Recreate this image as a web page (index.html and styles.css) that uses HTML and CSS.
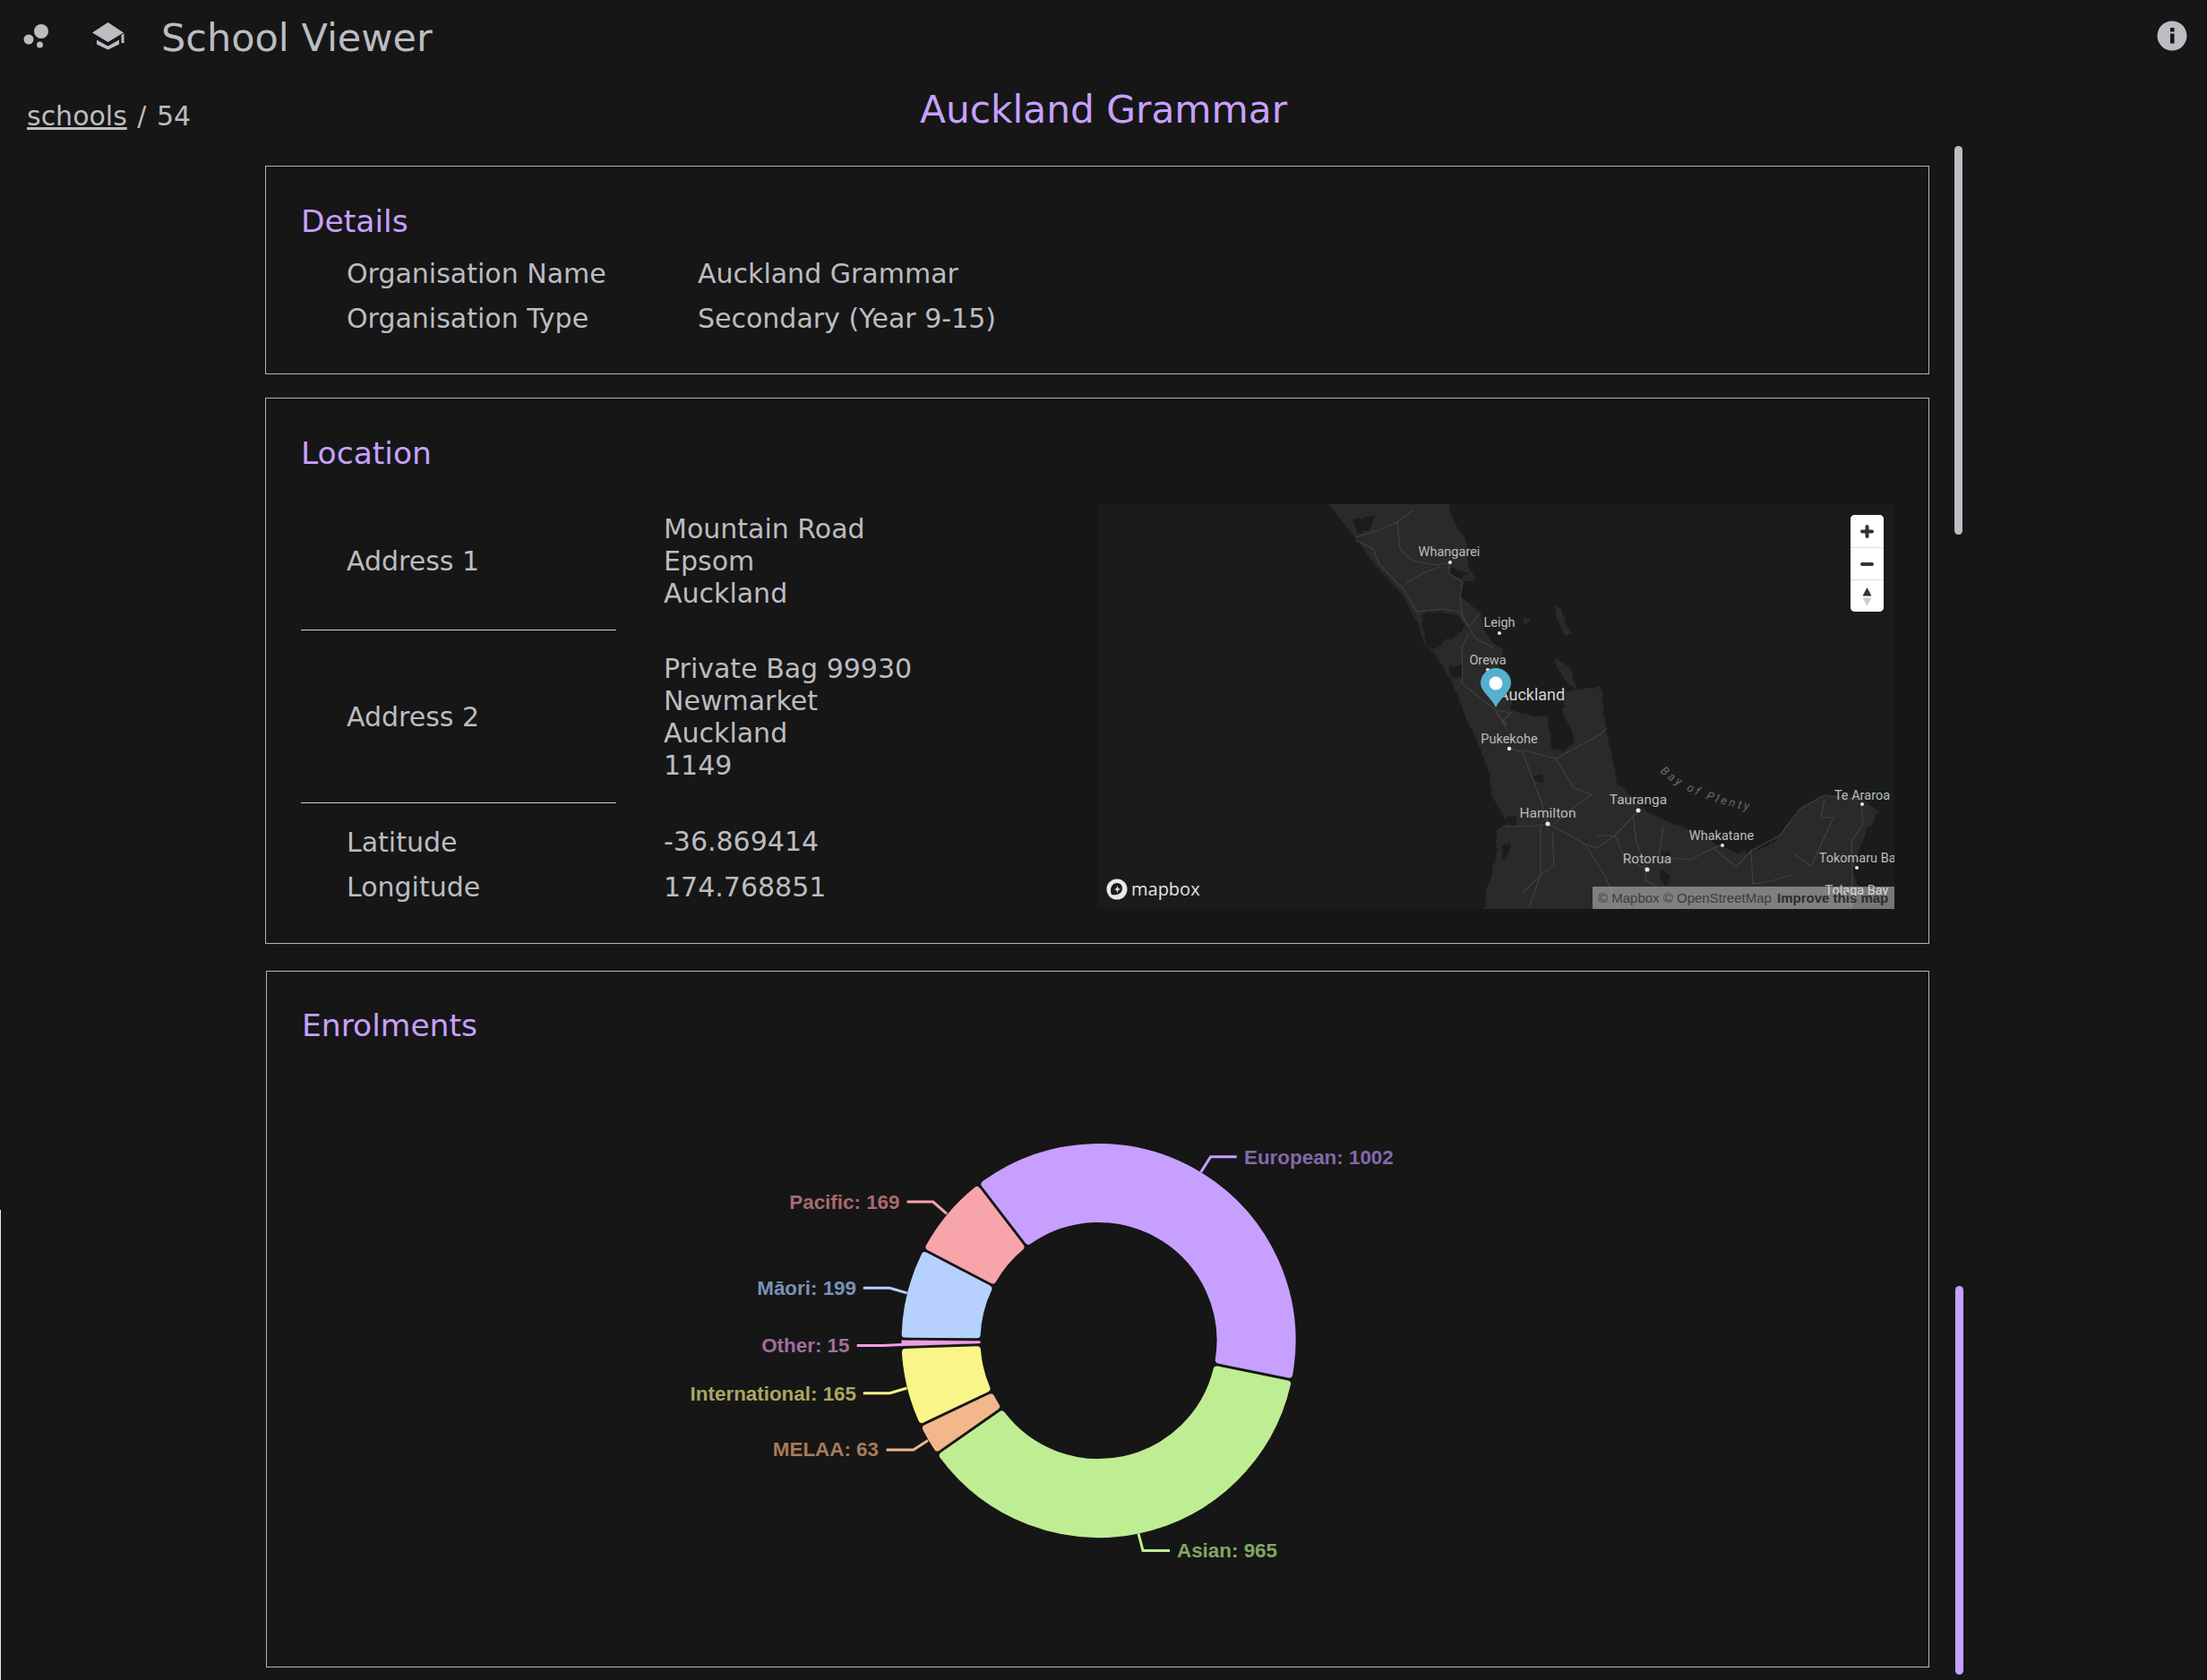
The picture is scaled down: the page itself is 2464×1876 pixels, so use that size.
FILE: index.html
```html
<!DOCTYPE html>
<html lang="en">
<head>
    <meta charset="UTF-8">
    <meta name="viewport" content="width=device-width, initial-scale=1.0">
    <title>School Viewer</title>
    <link rel="stylesheet" href="styles.css">
</head>
<body>
    <div id="app">
        <!-- Top bar -->
        <header class="topbar">
            <svg class="logo-dots" viewBox="0 0 60 60" width="60" height="60">
                <circle cx="46" cy="35" r="8"/>
                <circle cx="32" cy="44" r="5.5"/>
                <circle cx="44.5" cy="50" r="3.5"/>
            </svg>
            <svg class="logo-school" viewBox="0 0 40 34" width="40" height="34">
                <path d="M19.5 2 L37 13.5 L19.5 24 L2 13.5 Z"/>
                <path d="M7 21.5 L19.5 28.5 L32 21.5 L32 26.5 L19.5 32.5 L7 26.5 Z"/>
                <path d="M34.5 16 L37.5 14.5 L37.5 25 L34.5 25 Z"/>
            </svg>
            <span class="app-title">School Viewer</span>
            <svg class="info-icon" viewBox="0 0 34 34" width="34" height="34">
                <circle cx="17" cy="17" r="16.5"/>
                <rect class="info-mark" x="15" y="8" width="4.5" height="4.5"/>
                <rect class="info-mark" x="15" y="14.5" width="4.5" height="11"/>
            </svg>
        </header>

        <div class="title-row">
            <div class="breadcrumb"><a href="#">schools</a> / 54</div>
            <h1>Auckland Grammar</h1>
        </div>

        <main class="content">
            <!-- Details -->
            <section class="card card-details">
                <h2>Details</h2>
                <div class="detail-row"><span class="detail-label">Organisation Name</span><span>Auckland Grammar</span></div>
                <div class="detail-row"><span class="detail-label">Organisation Type</span><span>Secondary (Year 9-15)</span></div>
            </section>

            <!-- Location -->
            <section class="card card-location">
                <h2>Location</h2>
                <div class="location-body">
                    <table class="location-table">
                        <tr class="row-address1">
                            <th>Address 1</th>
                            <td>Mountain Road<br>Epsom<br>Auckland</td>
                        </tr>
                        <tr class="row-address2">
                            <th>Address 2</th>
                            <td>Private Bag 99930<br>Newmarket<br>Auckland<br>1149</td>
                        </tr>
                        <tr class="row-lat">
                            <th>Latitude</th>
                            <td>-36.869414</td>
                        </tr>
                        <tr class="row-long">
                            <th>Longitude</th>
                            <td>174.768851</td>
                        </tr>
                    </table>

                    <div class="map">
                        <svg class="map-canvas" viewBox="1225 563 890 452" width="890" height="452">
                            <defs>
                                <filter id="rough" x="-5%" y="-5%" width="110%" height="110%">
                                    <feTurbulence type="fractalNoise" baseFrequency="0.16" numOctaves="2" seed="4"/>
                                    <feDisplacementMap in="SourceGraphic" scale="6"/>
                                </filter>
                            </defs>
                            <g filter="url(#rough)">
                                <path class="land" d="M1470 545 L1483 563 L1513 600 L1537 633 L1567 666 L1583 696 L1590 720 L1602 730 L1620 760 L1640 810 L1645 817 L1663 863 L1665 887 L1683 920 L1670 928 L1672 947 L1662 987 L1655 1030 L2060 1030 L2067 1015 L2075 990 L2068 973 L2077 943 L2087 923 L2098 907 L2080 893 L2037 888 L2010 903 L1987 933 L1970 948 L1940 953 L1917 943 L1890 928 L1860 917 L1833 903 L1810 878 L1805 877 L1803 860 L1793 813 L1787 767 L1748 772 L1745 797 L1757 820 L1757 830 L1747 838 L1733 837 L1730 817 L1727 800 L1713 800 L1687 793 L1687 776 L1673 743 L1680 726 L1667 718 L1657 703 L1652 683 L1630 666 L1633 650 L1647 645 L1640 635 L1637 603 L1623 583 L1617 563 L1612 545 Z"/>
                                <path class="land" d="M1737 676 L1743 680 L1748 696 L1757 710 L1747 710 L1737 690 Z"/>
                                <path class="land" d="M1702 691 L1708 691 L1708 697 L1702 697 Z"/>
                                <path class="land" d="M1735 735 L1753 745 L1760 770 L1750 763 L1737 743 Z"/>
                                <path class="water" d="M1587 686 L1603 683 L1627 686 L1637 700 L1627 710 L1613 716 L1602 724 L1592 722 L1590 703 Z"/>
                                <path class="water" d="M1618 633 L1640 640 L1632 645 L1620 643 Z"/>
                                <path class="water" d="M1510 580 L1535 575 L1530 590 L1515 595 Z"/>
                                <path class="water" d="M1618 745 L1633 743 L1633 755 L1620 757 Z"/>
                                <path class="water" d="M1713 867 L1723 865 L1724 875 L1715 873 Z"/>
                                <path class="water" d="M1682 912 L1694 912 L1692 922 L1684 920 Z"/>
                                <path class="water" d="M1677 945 L1686 940 L1684 956 L1676 962 Z"/>
                                <path class="water" d="M1855 952 L1864 950 L1866 958 L1858 957 Z"/>
                                <path class="water" d="M1855 970 L1866 980 L1860 990 L1853 980 Z"/>
                            </g>
                            <g class="roads">
                                <path d="M1513 603 L1533 613 L1540 630 L1567 658 L1582 683 L1610 680 L1630 683 L1640 700 L1647 713 L1667 723"/>
                                <path d="M1560 583 L1563 613 L1577 626 L1603 631 L1618 628 L1618 641 L1633 650 L1630 666 L1633 690 L1640 700"/>
                                <path d="M1513 600 L1537 593 L1560 583 L1577 570"/>
                                <path d="M1570 651 L1587 641 L1607 633"/>
                                <path d="M1640 700 L1652 685"/>
                                <path d="M1640 708 L1632 723 L1633 750 L1632 763 L1653 780 L1670 793 L1683 816"/>
                                <path d="M1673 793 L1687 796 L1677 806 L1683 810 L1670 796"/>
                                <path d="M1685 835 L1700 840 L1720 893 L1728 920"/>
                                <path d="M1698 837 L1737 847 L1763 833 L1787 820 L1793 813"/>
                                <path d="M1737 847 L1757 880 L1777 887 L1763 897 L1735 920"/>
                                <path d="M1677 923 L1715 922 L1728 920 L1753 933 L1770 943 L1783 947 L1803 933 L1828 907"/>
                                <path d="M1720 923 L1720 977 L1707 1013"/>
                                <path d="M1733 930 L1735 967 L1720 977 L1700 997"/>
                                <path d="M1823 910 L1827 940 L1838 970 L1837 983 L1850 990"/>
                                <path d="M1783 933 L1803 933 L1813 957 L1837 970"/>
                                <path d="M1857 923 L1852 957 L1887 960 L1913 947 L1923 943"/>
                                <path d="M1913 947 L1938 968 L1955 950 L1957 987 L1980 983 L2000 977"/>
                                <path d="M1955 950 L1987 933 L2010 903 L2037 888 L2080 893"/>
                                <path d="M2037 893 L2033 913 L2047 913 L2022 967 L2002 953"/>
                                <path d="M2078 897 L2080 920 L2067 940 L2068 970 L2067 1013"/>
                                <path d="M1770 943 L1793 980 L1807 1015"/>
                            </g>
                            <g class="map-dots">
                                <circle cx="1619" cy="628" r="2"/>
                                <circle cx="1674" cy="707" r="2"/>
                                <circle cx="1661" cy="748" r="2"/>
                                <circle cx="1685" cy="836" r="2.2"/>
                                <circle cx="1728" cy="920" r="2.5"/>
                                <circle cx="1829" cy="905" r="2.5"/>
                                <circle cx="2079" cy="898" r="2"/>
                                <circle cx="1923" cy="944" r="2"/>
                                <circle cx="1839" cy="971" r="2.5"/>
                                <circle cx="2073" cy="969" r="2"/>
                            </g>
                            <g class="map-labels">
                                <text x="1618" y="621">Whangarei</text>
                                <text x="1674" y="700">Leigh</text>
                                <text x="1661" y="742">Orewa</text>
                                <text class="label-city" x="1710" y="782">Auckland</text>
                                <text x="1685" y="830">Pukekohe</text>
                                <text class="label-mid" x="1728" y="913">Hamilton</text>
                                <text class="label-mid" x="1829" y="898">Tauranga</text>
                                <text x="2079" y="893">Te Araroa</text>
                                <text x="1922" y="938">Whakatane</text>
                                <text class="label-mid" x="1839" y="964">Rotorua</text>
                                <text x="2077" y="963">Tokomaru Bay</text>
                                <text x="2073" y="999">Tolaga Bay</text>
                            </g>
                            <path id="bay-curve" class="bay-path" d="M1853 862 Q1890 895 1960 906"/>
                            <text class="bay-label"><textPath href="#bay-curve">Bay of Plenty</textPath></text>
                            <path class="pin" d="M1670 790 C1665 779 1653 772 1653 763 A17 17 0 0 1 1687 763 C1687 772 1675 779 1670 790 Z"/>
                            <circle class="pin-dot" cx="1670" cy="763" r="7.5"/>
                        </svg>

                        <div class="map-logo">
                            <svg viewBox="0 0 24 24" width="24" height="24">
                                <circle cx="12" cy="12" r="11.5" fill="#e8e8e8"/>
                                <path d="M12.5 5 C8 5 5 8.5 5 13 C5 15 5.5 17 6 18 C9 18.5 13 18.5 16 16 C19 13 19 5.5 12.5 5 Z" fill="#1b1d1d"/>
                                <path d="M12.5 8 L13.5 11 L16 12 L13.5 13 L12.5 16 L11.5 13 L9 12 L11.5 11 Z" fill="#e8e8e8"/>
                            </svg>
                            <span>mapbox</span>
                        </div>

                        <div class="map-controls">
                            <button class="map-btn">
                                <svg viewBox="0 0 37 36" width="37" height="36"><path class="ctrl-stroke" d="M18.5 13 V24 M13 18.5 H24"/></svg>
                            </button>
                            <button class="map-btn">
                                <svg viewBox="0 0 37 36" width="37" height="36"><path class="ctrl-stroke" d="M13 18 H24"/></svg>
                            </button>
                            <button class="map-btn">
                                <svg viewBox="0 0 37 36" width="37" height="36">
                                    <path d="M18.5 8 L23.5 17.5 H13.5 Z" fill="#333"/>
                                    <path d="M18.5 29 L23.5 19.5 H13.5 Z" fill="#ccc"/>
                                </svg>
                            </button>
                        </div>

                        <div class="map-attrib"><span>© Mapbox © OpenStreetMap</span> <b>Improve this map</b></div>
                    </div>
                </div>
            </section>

            <!-- Enrolments -->
            <section class="card card-enrolments">
                <h2>Enrolments</h2>
                <svg id="enrolment-chart" class="chart" viewBox="297 1200 1858 640" width="1858" height="640"></svg>
            </section>
        </main>

        <div class="scroll-track-grey"></div>
        <div class="scroll-track-purple"></div>
        <div class="edge-line"></div>
    </div>

    <script src="chart.js"></script>
</body>
</html>
```

FILE: styles.css
```css
html, body {
    margin: 0;
    padding: 0;
    height: 100%;
    overflow: hidden;
}
body {
    font-family: "DejaVu Sans", sans-serif;
    background-color: #161616;
    color: #bcbcc2;
}
#app {
    position: relative;
    width: 2464px;
    height: 1876px;
    overflow: hidden;
}
.topbar {
    position: relative;
    height: 84px;
}
.logo-dots {
    position: absolute;
    left: 0;
    top: 0;
    fill: #bcbcc2;
}
.logo-school {
    position: absolute;
    left: 101px;
    top: 23px;
    fill: #bcbcc2;
}
.app-title {
    position: absolute;
    left: 180px;
    top: 14px;
    font-size: 43px;
    line-height: 56px;
}
.info-icon {
    position: absolute;
    left: 2408px;
    top: 23px;
    fill: #bcbcc2;
}
.info-mark {
    fill: #161616;
}
.title-row {
    position: relative;
    height: 101px;
}
.breadcrumb {
    position: absolute;
    left: 30px;
    top: 25px;
    font-size: 30px;
    line-height: 42px;
    word-spacing: 2px;
}
.breadcrumb a {
    color: #bcbcc2;
}
h1 {
    margin: 0;
    padding-top: 15px;
    text-align: center;
    font-size: 42.3px;
    line-height: 48px;
    font-weight: 400;
    color: #c7a0ff;
}
.content {
    margin-left: 296px;
    width: 1858px;
}
.card {
    box-sizing: border-box;
    border: 1px solid #b4b4b4;
    padding: 38px 38px 37px 39px;
}
.card h2 {
    margin: 0;
    font-size: 34.5px;
    line-height: 46px;
    font-weight: 400;
    color: #c7a0ff;
}
.card-details {
    height: 233px;
    margin-bottom: 26px;
}
.card-details h2 {
    margin-bottom: 11px;
}
.detail-row {
    display: flex;
    padding-left: 51px;
    font-size: 30px;
    line-height: 50px;
}
.detail-label {
    width: 392px;
}
.card-location {
    height: 610px;
    margin-bottom: 30px;
}
.location-body {
    display: flex;
    justify-content: space-between;
}
.location-table {
    border-collapse: collapse;
    margin-top: 18px;
    font-size: 30px;
    line-height: 36px;
}
.location-table th {
    width: 352px;
    padding: 0 0 0 51px;
    box-sizing: border-box;
    text-align: left;
    font-weight: 400;
}
.location-table td {
    padding: 0 0 0 53px;
    width: 400px;
}
.row-address1 td, .row-address1 th {
    padding-top: 26px;
    padding-bottom: 22px;
}
.row-address2 td, .row-address2 th {
    padding-top: 26px;
    padding-bottom: 23px;
}
.row-address1 th, .row-address2 th {
    border-bottom: 1px solid #d0d0d0;
}
.row-lat td, .row-lat th {
    padding-top: 26px;
    padding-bottom: 7px;
}
.row-long td, .row-long th {
    padding-top: 7px;
    padding-bottom: 7px;
}
.map {
    position: relative;
    width: 890px;
    height: 452px;
    margin-top: 34px;
    background-color: #1a1c1c;
    overflow: hidden;
}
.map-canvas {
    display: block;
}
.land {
    fill: #2b2b2b;
}
.water {
    fill: #1a1c1c;
}
.roads {
    fill: none;
    stroke: #414141;
    stroke-width: 1.2;
}
.map-dots {
    fill: #e8e8e8;
}
.map-labels {
    font-family: Roboto, sans-serif;
    font-size: 14.5px;
    fill: #bcbcbc;
    text-anchor: middle;
}
.label-mid {
    font-size: 15.5px;
}
.label-city {
    font-size: 18px;
    fill: #d4d4d4;
}
.bay-path {
    fill: none;
}
.bay-label {
    font-family: Roboto, sans-serif;
    font-size: 13px;
    font-style: italic;
    letter-spacing: 3px;
    fill: #6a6a6a;
}
.pin {
    fill: #56b0cf;
}
.pin-dot {
    fill: #fff;
}
.map-logo {
    position: absolute;
    left: 10px;
    bottom: 10px;
    display: flex;
    align-items: center;
    gap: 4px;
    font-family: "Open Sans", sans-serif;
    font-size: 20px;
    font-weight: 500;
    line-height: 24px;
    color: #e4e4e4;
}
.map-logo svg {
    display: block;
}
.map-controls {
    position: absolute;
    top: 12px;
    right: 12px;
    width: 37px;
    background: #fff;
    border-radius: 5px;
    overflow: hidden;
}
.map-btn {
    display: block;
    width: 37px;
    height: 36px;
    padding: 0;
    border: 0;
    border-top: 1px solid #ddd;
    background: #fff;
}
.map-btn:first-child {
    border-top: 0;
}
.map-btn svg {
    display: block;
}
.ctrl-stroke {
    fill: none;
    stroke: #333;
    stroke-width: 4;
    stroke-linecap: round;
}
.map-attrib {
    position: absolute;
    right: 0;
    bottom: 0;
    box-sizing: border-box;
    width: 337px;
    height: 25px;
    padding-left: 6px;
    background: rgba(255, 255, 255, 0.4);
    font-family: "Liberation Sans", sans-serif;
    font-size: 15px;
    line-height: 25px;
    color: #3c3c3c;
    white-space: nowrap;
}
.map-attrib b {
    margin-left: 2px;
    color: #2c2c2c;
}
.card-enrolments {
    height: 778px;
    margin-left: 1px;
    padding-top: 37px;
    position: relative;
}
.chart {
    position: absolute;
    left: -1px;
    top: 115px;
    display: block;
}
.chart-label {
    font-family: "Liberation Sans", sans-serif;
    font-size: 22.4px;
    font-weight: 700;
}
.chart-leader {
    fill: none;
    stroke-width: 3;
}
.scroll-track-grey, .scroll-track-purple {
    position: absolute;
    width: 9px;
    border-radius: 5px;
}
.scroll-track-grey {
    left: 2182px;
    top: 163px;
    height: 434px;
    background-color: #bcbcc2;
}
.scroll-track-purple {
    left: 2183px;
    top: 1436px;
    height: 434px;
    background-color: #c7a0ff;
}
.edge-line {
    position: absolute;
    left: 0;
    top: 1351px;
    width: 1px;
    height: 525px;
    background-color: #e8e8e8;
}
```

FILE: chart.js
```js
// Enrolment donut, angles are degrees clockwise from 12 o'clock
const CX = 1226.5, CY = 1497, R_IN = 132, R_OUT = 220, GAP = 3;

const sectors = [
    { name: 'European', value: 1002, from: -37.5, to: 101.5, color: '#c7a0ff', text: '#8468ab', x: 1389, y: 1300, anchor: 'start', leader: '1340.6,1309 1351.6,1291.7 1380.7,1291.7' },
    { name: 'Asian', value: 965, from: 101.5, to: 235, color: '#bfed93', text: '#82a763', x: 1314, y: 1739, anchor: 'start', leader: '1271,1712.5 1276,1731.4 1306,1731.4' },
    { name: 'MELAA', value: 63, from: 235, to: 244.5, color: '#f2b78b', text: '#a87a5b', x: 981, y: 1625.5, anchor: 'end', leader: '1036,1608.5 1019.8,1619 989.6,1619' },
    { name: 'International', value: 165, from: 244.5, to: 268, color: '#faf589', text: '#aba75f', x: 956, y: 1564, anchor: 'end', leader: '1012.6,1550 993.4,1555.8 963.8,1555.8' },
    { name: 'Other', value: 15, from: 268, to: 270.5, color: '#ee9fe3', text: '#a06f9c', x: 948.5, y: 1510, anchor: 'end', leader: '1007,1501.4 986.8,1502.4 956.7,1502.4', thin: true },
    { name: 'Māori', value: 199, from: 270.5, to: 297.5, color: '#b6d1ff', text: '#7a91b8', x: 956, y: 1446, anchor: 'end', leader: '1012.6,1443.9 993.4,1438.3 963.8,1438.3' },
    { name: 'Pacific', value: 169, from: 297.5, to: 322.5, color: '#f7a4ab', text: '#a96a6d', x: 1004.5, y: 1350, anchor: 'end', leader: '1057,1355.4 1041.7,1342 1012.6,1342' }
];

const chart = document.getElementById('enrolment-chart');
const SVG_NS = 'http://www.w3.org/2000/svg';

function polar(r, deg) {
    const a = deg * Math.PI / 180;
    return (CX + r * Math.sin(a)).toFixed(2) + ' ' + (CY - r * Math.cos(a)).toFixed(2);
}

function sectorPath(s) {
    const corner = s.thin ? 0.2 : 4;
    const outer = R_OUT - corner, inner = R_IN + corner;
    const pad = corner + GAP / 2;
    const dOut = pad / outer * 180 / Math.PI;
    const dIn = pad / inner * 180 / Math.PI;
    const large = s.to - s.from > 180 ? 1 : 0;
    return 'M' + polar(outer, s.from + dOut) +
        ' A' + outer + ' ' + outer + ' 0 ' + large + ' 1 ' + polar(outer, s.to - dOut) +
        ' L' + polar(inner, s.to - dIn) +
        ' A' + inner + ' ' + inner + ' 0 ' + large + ' 0 ' + polar(inner, s.from + dIn) + ' Z';
}

function add(tag, attrs, parent) {
    const el = document.createElementNS(SVG_NS, tag);
    Object.keys(attrs).forEach(k => el.setAttribute(k, attrs[k]));
    parent.appendChild(el);
    return el;
}

sectors.forEach(s => {
    add('path', {
        d: sectorPath(s),
        fill: s.color,
        stroke: s.color,
        'stroke-width': s.thin ? 0.4 : 8,
        'stroke-linejoin': 'round'
    }, chart);
    add('polyline', { class: 'chart-leader', points: s.leader, stroke: s.color }, chart);
    const label = add('text', { class: 'chart-label', x: s.x, y: s.y, fill: s.text, 'text-anchor': s.anchor }, chart);
    label.textContent = s.name + ': ' + s.value;
});
```
